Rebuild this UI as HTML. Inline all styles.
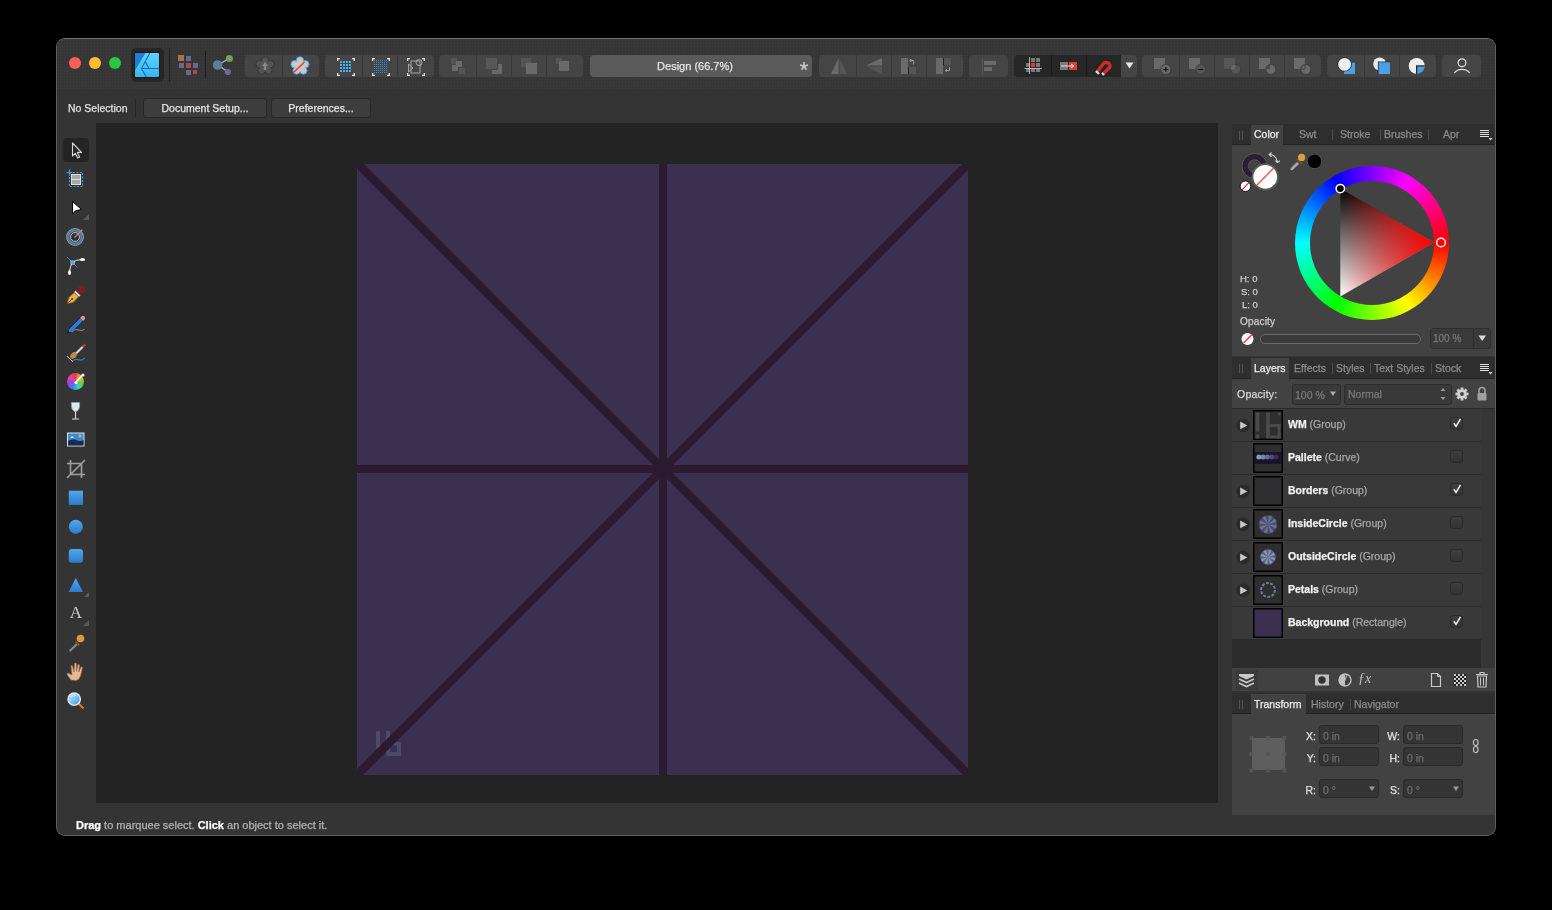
<!DOCTYPE html>
<html><head><meta charset="utf-8">
<style>
*{margin:0;padding:0;box-sizing:border-box}
html,body{width:1552px;height:910px;background:#000;overflow:hidden;font-family:"Liberation Sans",sans-serif;}
.a{position:absolute}
#win{position:absolute;left:56px;top:38px;width:1440px;height:798px;background:#343434;border:1px solid #5e5e5e;border-top-color:#727272;border-radius:9px;overflow:hidden}
#tb{position:absolute;left:0;top:0;width:1438px;height:50px;background-color:#353535;background-image:radial-gradient(circle,#393939 0.9px,transparent 1.1px);background-size:3px 3px}
.grp{position:absolute;top:55px;height:22px;background:#454545;border-radius:4px}
.dv{position:absolute;top:0;width:1px;height:22px;background:#383838}
.txt{position:absolute;white-space:nowrap;font-size:10.5px;line-height:12px;will-change:transform;-webkit-text-stroke:0.25px currentColor}
</style></head><body>
<div id="win"><div id="tb"></div></div>

<!-- traffic lights -->
<div class="a" style="left:69px;top:57px;width:12px;height:12px;border-radius:50%;background:#fe5f57"></div>
<div class="a" style="left:89px;top:57px;width:12px;height:12px;border-radius:50%;background:#febc2e"></div>
<div class="a" style="left:109px;top:57px;width:12px;height:12px;border-radius:50%;background:#28c840"></div>


<!-- persona -->
<div class="a" style="left:131px;top:48px;width:33px;height:34px;background:#262626;border-radius:5px"></div>
<svg class="a" style="left:134px;top:52px" width="26" height="26" viewBox="-1 -1 26 26">
<defs><linearGradient id="pg" x1="0" y1="0" x2="0" y2="1"><stop offset="0" stop-color="#5ad4fb"/><stop offset="1" stop-color="#38b8f2"/></linearGradient></defs>
<rect x="-1" y="-1" width="26" height="26" fill="#1d1614"/>
<rect x="0" y="0" width="24" height="24" rx="1" fill="url(#pg)"/>
<path d="M0 0 H10.5 L0 17.5 Z" fill="#1f80d0"/>
<path d="M14.8 0 L6.5 15.5 L11.3 24 M10.5 9 L14 15.5 M6.5 15.5 H24" stroke="#1a6ab8" stroke-width="1.1" fill="none"/>
</svg>
<div class="a" style="left:169px;top:48px;width:1px;height:34px;background:#1e1e1e"></div>
<svg class="a" style="left:176px;top:53px" width="24" height="24">
<rect x="2" y="2" width="6" height="6" fill="#a8734a"/>
<rect x="10" y="3" width="5" height="5" fill="#6a6891"/>
<rect x="3" y="10" width="5" height="5" fill="#6a6891"/>
<rect x="10" y="10" width="5" height="5" fill="#ad4b4b"/>
<rect x="17" y="10" width="5" height="5" fill="#6a6891"/>
<rect x="10" y="17" width="5" height="5" fill="#6a6891"/>
<rect x="17" y="17" width="4" height="4" fill="#ad4b4b"/>
</svg>
<div class="a" style="left:205px;top:51px;width:1px;height:27px;background:#1e1e1e"></div>
<svg class="a" style="left:210px;top:53px" width="24" height="24">
<path d="M8 12 L19 5.5 M8 12 L18 19" stroke="#b8b8b8" stroke-width="1.2"/>
<circle cx="7.6" cy="12" r="4.8" fill="#5a809e"/>
<circle cx="19.4" cy="5.5" r="3.6" fill="#789a5e"/>
<circle cx="17.9" cy="19" r="3.1" fill="#6a6a9a"/>
</svg>

<div class="grp" style="left:245px;width:74px"><div class="dv" style="left:37px"></div></div>
<svg class="a" style="left:255px;top:56px" width="20" height="20" viewBox="-10 -10 20 20">
<g fill="#545454" stroke="#2e2e2e" stroke-width="0.8"><circle cx="0" cy="-5.6" r="3.7"/><circle cx="5.4" cy="-1.8" r="3.7"/><circle cx="3.4" cy="4.6" r="3.7"/><circle cx="-3.4" cy="4.6" r="3.7"/><circle cx="-5.4" cy="-1.8" r="3.7"/></g>
<circle r="5.6" fill="#545454"/>
<path d="M0 -4 L-3 0 H-1.2 V4 H1.2 V0 H3 Z" fill="#888"/>
</svg>
<svg class="a" style="left:290px;top:56px" width="20" height="20" viewBox="-10 -10 20 20">
<g fill="#c8c8c8" stroke="#3a9ae0" stroke-width="1"><circle cx="0" cy="-5.6" r="3.7"/><circle cx="5.4" cy="-1.8" r="3.7"/><circle cx="3.4" cy="4.6" r="3.7"/><circle cx="-3.4" cy="4.6" r="3.7"/><circle cx="-5.4" cy="-1.8" r="3.7"/></g>
<circle r="5.8" fill="#c8c8c8"/>
<path d="M-6.5 6.5 L4.5 -4" stroke="#f03a2a" stroke-width="1.5"/>
</svg>

<div class="grp" style="left:325px;width:109px"><div class="dv" style="left:37px"></div><div class="dv" style="left:72px"></div></div>
<svg class="a" style="left:337px;top:58px" width="18" height="18">
<path d="M0.5 3 V0.5 H3 M15 0.5 H17.5 V3 M17.5 15 V17.5 H15 M3 17.5 H0.5 V15" stroke="#e8e8e8" stroke-width="1.6" fill="none"/>
<g fill="#4ab0f4"><rect x="3" y="3" width="2" height="2"/><rect x="6" y="3" width="2" height="2"/><rect x="9" y="3" width="2" height="2"/><rect x="12" y="3" width="2" height="2"/>
<rect x="3" y="6" width="2" height="2"/><rect x="6" y="6" width="2" height="2"/><rect x="9" y="6" width="2" height="2"/><rect x="12" y="6" width="2" height="2"/>
<rect x="3" y="9" width="2" height="2"/><rect x="6" y="9" width="2" height="2"/><rect x="9" y="9" width="2" height="2"/><rect x="12" y="9" width="2" height="2"/>
<rect x="3" y="12" width="2" height="2"/><rect x="6" y="12" width="2" height="2"/><rect x="9" y="12" width="2" height="2"/><rect x="12" y="12" width="2" height="2"/></g>
</svg>
<svg class="a" style="left:372px;top:58px" width="18" height="18">
<path d="M0.5 3 V0.5 H3 M15 0.5 H17.5 V3 M17.5 15 V17.5 H15 M3 17.5 H0.5 V15" stroke="#e8e8e8" stroke-width="1.6" fill="none"/>
<path d="M2.5 2 V16 M4.5 2 V16 M6.5 2 V16 M8.5 2 V16 M10.5 2 V16 M12.5 2 V16 M14.5 2 V16" stroke="#3a8fd0" stroke-width="1" stroke-dasharray="1 1"/>
</svg>
<svg class="a" style="left:407px;top:58px" width="18" height="18">
<path d="M0.5 3 V0.5 H3 M15 0.5 H17.5 V3 M17.5 15 V17.5 H15 M3 17.5 H0.5 V15" stroke="#e8e8e8" stroke-width="1.6" fill="none"/>
<g stroke="#b0b0b0" stroke-width="0.9" fill="none"><rect x="4" y="3" width="9" height="12"/><circle cx="12" cy="4.5" r="3"/><path d="M1.5 6 V14 L6 10 Z"/></g>
</svg>

<div class="grp" style="left:439px;width:144px"><div class="dv" style="left:37px"></div><div class="dv" style="left:72px"></div><div class="dv" style="left:107px"></div></div>
<svg class="a" style="left:449px;top:57px" width="20" height="20">
<rect x="2" y="1" width="6" height="6" fill="#555"/><rect x="7" y="4" width="6" height="6" fill="#6a6a6a"/><rect x="3" y="8" width="6" height="6" fill="#6a6a6a"/><rect x="10" y="11" width="6" height="6" fill="#555"/>
</svg>
<svg class="a" style="left:484px;top:57px" width="20" height="20">
<rect x="2" y="1" width="11" height="11" fill="#575757"/><path d="M14 7 H18 V17 H8 V13 H14 Z" fill="#6a6a6a"/>
</svg>
<svg class="a" style="left:519px;top:57px" width="20" height="20">
<rect x="2" y="1" width="10" height="9" fill="#555"/><rect x="7" y="6" width="11" height="11" fill="#6a6a6a"/>
</svg>
<svg class="a" style="left:554px;top:57px" width="20" height="20">
<rect x="2" y="1" width="6" height="6" fill="#555"/><rect x="5" y="4" width="10" height="10" fill="#6a6a6a"/>
</svg>

<div class="a" style="left:590px;top:55px;width:222px;height:22px;background:#5a5a5a;border-radius:4px"></div>
<div class="txt" style="left:590px;top:59px;width:210px;text-align:center;color:#e4e4e4;font-size:11px;line-height:14px">Design (66.7%)</div>
<svg class="a" style="left:798px;top:60px" width="12" height="12" viewBox="-6 -6.3 12 12"><path d="M0 0 L0.00 -4.20 M0 0 L3.99 -1.30 M0 0 L2.47 3.40 M0 0 L-2.47 3.40 M0 0 L-3.99 -1.30 " stroke="#c8c8c8" stroke-width="1.6" stroke-linecap="butt"/></svg>

<div class="grp" style="left:819px;width:144px"><div class="dv" style="left:37px"></div><div class="dv" style="left:72px"></div><div class="dv" style="left:107px"></div></div>
<svg class="a" style="left:829px;top:57px" width="20" height="20">
<path d="M2 17 L9.5 1 V17 Z" fill="#6a6a6a"/><path d="M10.5 1 L18 17 H10.5 Z" fill="#555"/>
</svg>
<svg class="a" style="left:864px;top:57px" width="20" height="20">
<path d="M2 8.5 L18 1 V8.5 Z" fill="#6a6a6a"/><path d="M2 9.5 L18 17 V9.5 Z" fill="#555"/>
</svg>
<svg class="a" style="left:899px;top:57px" width="20" height="20">
<rect x="2" y="1" width="7" height="16" fill="#6a6a6a"/><rect x="10" y="10" width="7" height="7" fill="#555"/><rect x="9" y="10" width="1" height="7" fill="#222"/>
<path d="M10.5 3.5 L12 2 V5 Z M11.5 3.5 H14.5 V7.5" stroke="#9a9a9a" stroke-width="1" fill="none"/>
</svg>
<svg class="a" style="left:934px;top:57px" width="20" height="20">
<rect x="2" y="1" width="7" height="16" fill="#6a6a6a"/><rect x="10" y="1" width="7" height="7" fill="#555"/><rect x="9" y="1" width="1" height="7" fill="#222"/>
<path d="M15.5 10 V13.5 H11.5 M13 12 L11.5 13.5 L13 15" stroke="#9a9a9a" stroke-width="1" fill="none"/>
</svg>

<div class="grp" style="left:969px;width:39px"></div>
<svg class="a" style="left:979px;top:57px" width="20" height="20">
<rect x="3" y="1" width="1" height="16" fill="#555"/><rect x="5" y="4" width="12" height="4" fill="#6a6a6a"/><rect x="5" y="10" width="8" height="4" fill="#6a6a6a"/>
</svg>

<div class="grp" style="left:1014px;width:123px;background:#454545"></div>
<div class="a" style="left:1014px;top:55px;width:107px;height:22px;background:#262626;border-radius:4px 0 0 4px"></div>
<div class="a" style="left:1051px;top:55px;width:1px;height:22px;background:#1a1a1a"></div>
<div class="a" style="left:1086px;top:55px;width:1px;height:22px;background:#1a1a1a"></div>
<svg class="a" style="left:1024px;top:56px" width="20" height="20">
<g fill="#7a7a7a"><rect x="7" y="2" width="4" height="4"/><rect x="12" y="2" width="4" height="4"/><rect x="2" y="7" width="4" height="4"/><rect x="12" y="7" width="4" height="4"/><rect x="7" y="12" width="4" height="4"/><rect x="12" y="12" width="4" height="4"/><rect x="2" y="12" width="4" height="4"/></g>
<rect x="7" y="7" width="4" height="4" fill="#e03a3a"/>
<path d="M5.5 1 V18 M0.5 12.5 H18" stroke="#cfcfcf" stroke-width="0.8"/>
</svg>
<svg class="a" style="left:1059px;top:56px" width="20" height="20">
<rect x="1" y="6" width="8" height="8" fill="#7a7a7a"/><rect x="10" y="6" width="8" height="8" fill="#e03a3a"/>
<path d="M2 10 H14 M12 8 L15 10 L12 12" stroke="#e8e8e8" stroke-width="1" fill="none"/>
</svg>
<svg class="a" style="left:1094px;top:56px" width="20" height="20">
<path d="M3 16 L10 7 A4 4 0 0 1 16 11 L9 18" stroke="#d42a2a" stroke-width="3.2" fill="none"/>
<path d="M2 15 L5 18 M8 17 L10 19" stroke="#ddd" stroke-width="2.2"/>
</svg>
<svg class="a" style="left:1125px;top:62px" width="9" height="7"><path d="M0.5 0.5 H8.5 L4.5 6.5 Z" fill="#e8e8e8"/></svg>

<div class="grp" style="left:1142px;width:179px"><div class="dv" style="left:37px"></div><div class="dv" style="left:72px"></div><div class="dv" style="left:107px"></div><div class="dv" style="left:142px"></div></div>
<svg class="a" style="left:1152px;top:57px" width="20" height="20">
<rect x="2" y="1" width="11" height="11" fill="#6a6a6a"/><circle cx="13.8" cy="12.4" r="5" fill="#6a6a6a" stroke="#3a3a3a" stroke-width="0.8"/>
<path d="M11.3 12.5 H16.3 M13.8 10 V15" stroke="#111" stroke-width="1.1"/>
</svg>
<svg class="a" style="left:1187px;top:57px" width="20" height="20">
<rect x="2" y="1" width="11" height="11" fill="#6a6a6a"/><circle cx="13.8" cy="12.4" r="5" fill="#555" stroke="#3a3a3a" stroke-width="0.8"/>
<path d="M11.3 12.5 H16.3" stroke="#111" stroke-width="1.1"/>
</svg>
<svg class="a" style="left:1222px;top:57px" width="20" height="20">
<rect x="2" y="1" width="11" height="11" fill="#575757"/><circle cx="13.8" cy="12.4" r="5" fill="#555" stroke="#3a3a3a" stroke-width="0.8"/>
<path d="M8.8 12 A5 5 0 0 1 13 7.5 V12 Z" fill="#6a6a6a"/>
</svg>
<svg class="a" style="left:1257px;top:57px" width="20" height="20">
<rect x="2" y="1" width="11" height="11" fill="#6a6a6a"/><circle cx="13.8" cy="12.4" r="5" fill="#6a6a6a" stroke="#3a3a3a" stroke-width="0.8"/>
<path d="M8.8 12 A5 5 0 0 1 13 7.5 V12 Z" fill="#4a4a4a"/>
</svg>
<svg class="a" style="left:1292px;top:57px" width="20" height="20">
<rect x="2" y="1" width="11" height="11" fill="#6a6a6a"/><circle cx="13.8" cy="12.4" r="5" fill="#6a6a6a" stroke="#3a3a3a" stroke-width="0.8"/>
<path d="M8.8 12 A5 5 0 0 1 13 7.5 V12 Z" fill="#6a6a6a" stroke="#3a3a3a" stroke-width="0.8"/>
</svg>

<div class="grp" style="left:1327px;width:109px"><div class="dv" style="left:37px"></div><div class="dv" style="left:72px"></div></div>
<svg class="a" style="left:1337px;top:57px" width="20" height="20">
<rect x="7" y="5.8" width="11" height="11.2" fill="#4aa0e6"/><circle cx="7.6" cy="7.4" r="7.2" fill="#2a2a2a"/><circle cx="7.6" cy="7.4" r="6.4" fill="#eeeeee"/>
</svg>
<svg class="a" style="left:1372px;top:57px" width="20" height="20">
<circle cx="7.6" cy="6.9" r="6.4" fill="#eeeeee"/><rect x="5.8" y="4.5" width="12.2" height="12.5" fill="#2a2a2a"/><rect x="6.6" y="5.3" width="11.4" height="11.7" fill="#4aa0e6"/>
</svg>
<svg class="a" style="left:1407px;top:57px" width="20" height="20">
<circle cx="9.7" cy="8.9" r="8" fill="#eeeeee"/><path d="M9 8.2 H17.7 A8 8 0 0 1 9 16.9 Z" fill="#2a2a2a"/><path d="M10.3 9.6 H17.7 A8 8 0 0 1 10.3 16.8 Z" fill="#4aa0e6"/>
</svg>
<div class="grp" style="left:1442px;width:39px"></div>
<svg class="a" style="left:1452px;top:57px" width="20" height="20">
<circle cx="10" cy="5.8" r="3.9" stroke="#e0e0e0" stroke-width="1.2" fill="none"/><path d="M2.3 16 A9 7.5 0 0 1 17.7 16" stroke="#e0e0e0" stroke-width="1.2" fill="none"/>
</svg>

<!-- context bar -->
<div class="txt" style="left:68px;top:102px;color:#e0e0e0;font-size:10.5px">No Selection</div>
<div class="a" style="left:135px;top:99px;width:1px;height:19px;background:#262626"></div>
<div class="a" style="left:143px;top:98px;width:124px;height:20px;background:#3d3d3d;border:1px solid #272727;border-radius:3px"></div>
<div class="txt" style="left:143px;top:102px;width:124px;text-align:center;color:#e6e6e6;font-size:10.5px">Document Setup...</div>
<div class="a" style="left:271px;top:98px;width:100px;height:20px;background:#3d3d3d;border:1px solid #272727;border-radius:3px"></div>
<div class="txt" style="left:271px;top:102px;width:100px;text-align:center;color:#e6e6e6;font-size:10.5px">Preferences...</div>


<!-- left tools -->
<div class="a" style="left:63px;top:138px;width:26px;height:24px;background:#242424;border-radius:4px"></div>
<svg class="a" style="left:66px;top:140px" width="20" height="20">
<path d="M6.5 3 V16 L9.3 13.3 L11.6 18 L13.6 17 L11.4 12.4 H15.5 Z" fill="#262626" stroke="#d8d8d8" stroke-width="1.1" stroke-linejoin="round"/>
</svg>
<svg class="a" style="left:66px;top:169px" width="20" height="20">
<rect x="3.5" y="3.5" width="13" height="14" fill="none" stroke="#3aa0f0" stroke-width="1.2" stroke-dasharray="2 1.4"/>
<path d="M3.5 0.5 V6.5 M0.5 3.5 H6.5" stroke="#3aa0f0" stroke-width="1.2"/>
<rect x="5.5" y="5.5" width="9" height="10" fill="#a8a8a8" stroke="#e0e0e0" stroke-width="1"/>
<path d="M6 10.5 H14" stroke="#e0e0e0" stroke-width="1"/>
</svg>
<svg class="a" style="left:66px;top:198px" width="24" height="24">
<path d="M6.5 3.5 V16 L9.5 12.8 L15.5 11.5 Z" fill="#fff" stroke="#000" stroke-width="1" stroke-linejoin="round"/>
<path d="M23 16 V22 H17 Z" fill="#5a5a5a"/>
</svg>
<svg class="a" style="left:65px;top:227px" width="20" height="20">
<circle cx="10" cy="10" r="8.3" fill="#3a3a3a" stroke="#9a9a9a" stroke-width="1.2"/>
<circle cx="10" cy="10" r="6.6" fill="none" stroke="#4a86b8" stroke-width="2"/>
<circle cx="10" cy="10" r="4.5" fill="none" stroke="#bbbbbb" stroke-width="1"/>
<circle cx="10" cy="10" r="3" fill="#2e2e2e"/>
<path d="M9.5 10.5 L17.5 2.5" stroke="#e07a7a" stroke-width="1.2"/>
</svg>
<svg class="a" style="left:66px;top:256px" width="20" height="20">
<path d="M1 1 L11.5 11.5" stroke="#3a8ad0" stroke-width="0.9"/>
<path d="M6.5 6.5 Q10 3.5 16 3.5 M6.5 6.5 Q4 10 3.5 16" stroke="#e8e8e8" stroke-width="1" fill="none"/>
<rect x="4.9" y="4.9" width="3.3" height="3.3" fill="#3aa0f0" stroke="#cfe6ff" stroke-width="0.6"/>
<ellipse cx="16.5" cy="3.5" rx="2.6" ry="1.5" fill="#fff"/>
<ellipse cx="3.5" cy="16.5" rx="1.5" ry="2.6" fill="#fff"/>
</svg>
<svg class="a" style="left:66px;top:285px" width="20" height="20">
<path d="M1.2 18.8 L2.8 12.5 L8.2 7.5 L12.5 11.8 L7.5 17.2 Z" fill="#e8b040" stroke="#8a5a10" stroke-width="0.7"/>
<path d="M1.2 18.8 L6 14" stroke="#4a2a08" stroke-width="0.8"/><circle cx="6.2" cy="13.8" r="0.9" fill="#4a2a08"/>
<path d="M8 7 L13 12 L14.5 10.5 L9.5 5.5 Z" fill="#e0e0e0" stroke="#555" stroke-width="0.4"/>
<path d="M9.8 5.2 L14.8 10.2 L19 6 Q19.5 3 17.5 1.5 Q16 0.5 14 1 Z" fill="#7a2020"/>
</svg>
<svg class="a" style="left:66px;top:314px" width="20" height="20">
<path d="M2.5 15.5 L14 4 L17 7 L5.5 18.5 L1.5 19 Z" fill="#2e7ad8" stroke="#0d2a5a" stroke-width="0.9"/>
<path d="M14 4 L15.5 2.5 A2.1 2.1 0 0 1 18.5 5.5 L17 7 Z" fill="#e89090"/>
<path d="M1.5 19 L3 17.5" stroke="#111" stroke-width="1.5"/>
<path d="M6 18 Q9 14 13 16 Q16 17 18.5 15.5" stroke="#9a9a9a" stroke-width="0.9" fill="none"/>
</svg>
<svg class="a" style="left:66px;top:343px" width="20" height="20">
<path d="M4 14 Q5 9 9 9 L11 11 Q11 15 6 16 Z" fill="#c08a40"/>
<path d="M9.5 9.5 L16 3 L17.5 4.5 L11 11 Z" fill="#d8d8d8"/>
<path d="M16 3 L18.5 0.5 L20 2 L17.5 4.5 Z" fill="#e03030"/>
<path d="M1 13 L7 19" stroke="#e0e0e0" stroke-width="0.9"/>
<path d="M6 18 Q10 15 13 17 Q16 18 19 15" stroke="#3a8ad0" stroke-width="1" fill="none"/>
</svg>
<div class="a" style="left:67px;top:373px;width:17px;height:17px;border-radius:50%;background:conic-gradient(#e84040,#f0c040,#60d040,#40d0c0,#4080f0,#a040e0,#e040a0,#e84040)"></div>
<svg class="a" style="left:66px;top:372px" width="20" height="20">
<path d="M10 10 L16.5 3" stroke="#fff" stroke-width="1.3"/><circle cx="10" cy="10.5" r="1.6" fill="#fff"/><circle cx="17" cy="3" r="1.5" fill="#fff"/>
</svg>
<svg class="a" style="left:66px;top:401px" width="20" height="20">
<path d="M5.5 1.5 H13.5 Q14.5 9 9.5 11 Q4.5 9 5.5 1.5 Z" fill="#dfe6ee" stroke="#8aa0b8" stroke-width="0.8"/>
<path d="M9.5 11 V17.5 M6 18 H13" stroke="#cfd6de" stroke-width="1.2"/>
</svg>
<svg class="a" style="left:66px;top:430px" width="20" height="20">
<rect x="1" y="2.5" width="17.5" height="14" fill="#e0e0e0"/>
<rect x="2" y="3.5" width="15.5" height="12" fill="#3a8ad8"/>
<path d="M2 11 Q7 8 10 10 Q14 12 17.5 10 V15.5 H2 Z" fill="#1a2a4a"/>
<path d="M4 8 L6 6 L8 8 Z" fill="#fff"/><circle cx="14" cy="6" r="1.4" fill="#f0b040"/>
</svg>
<svg class="a" style="left:66px;top:459px" width="20" height="20">
<path d="M4.5 1 V15.5 H19 M1 4.5 H15.5 V19 M1 19 L19 1" stroke="#a0a0a0" stroke-width="1.6" fill="none"/>
</svg>
<svg class="a" style="left:66px;top:488px" width="20" height="20">
<defs><linearGradient id="bg1" x1="0" y1="0" x2="0" y2="1"><stop offset="0" stop-color="#52a8ec"/><stop offset="1" stop-color="#2a7ccc"/></linearGradient></defs>
<rect x="2.8" y="2.7" width="14.2" height="14.2" fill="url(#bg1)"/>
</svg>
<svg class="a" style="left:66px;top:517px" width="20" height="20">
<circle cx="9.8" cy="9.8" r="7" fill="url(#bg1)"/>
</svg>
<svg class="a" style="left:66px;top:546px" width="20" height="20">
<rect x="2.8" y="2.9" width="14.2" height="13.9" rx="3" fill="url(#bg1)"/>
</svg>
<svg class="a" style="left:66px;top:575px" width="24" height="24">
<path d="M9.8 3 L17 17 H2.6 Z" fill="url(#bg1)"/>
<path d="M23 17 V22 H18 Z" fill="#5a5a5a"/>
</svg>
<div class="a" style="left:66px;top:602px;width:20px;height:22px;font-family:'Liberation Serif',serif;font-size:17px;line-height:22px;color:#d0d0d0;text-align:center;will-change:transform">A</div>
<svg class="a" style="left:66px;top:604px" width="24" height="24"><path d="M23 16 V22 H17 Z" fill="#5a5a5a"/></svg>
<svg class="a" style="left:66px;top:633px" width="20" height="20">
<path d="M2.5 17.5 L10 10 L12 12 L4.5 19 Z" fill="#888" stroke="#333" stroke-width="0.7"/>
<path d="M9 9 L13 13 L14 12 L10 8 Z" fill="#a05a20"/>
<circle cx="14.5" cy="5.5" r="3.8" fill="#d89a3a"/>
</svg>
<svg class="a" style="left:66px;top:662px" width="20" height="20">
<path d="M5 18 Q2 14 1 12 Q1 10.5 3 11.5 L6 13 L5 4 Q5.5 2.5 6.5 4 L8 10 L8.5 1.5 Q9.5 0.5 10.3 1.5 L10.5 9.5 L12 2.5 Q13 1.8 13.5 3 L12.8 10 L15 5 Q16 4.5 16.5 5.5 L14.5 14 Q13 18 10 18.5 Z" fill="#e8b890" stroke="#9a6a4a" stroke-width="0.6"/>
</svg>
<svg class="a" style="left:66px;top:691px" width="20" height="20">
<path d="M12 12 L17.5 17.5" stroke="#e07a30" stroke-width="2"/>
<defs><linearGradient id="lz" x1="0" y1="0" x2="1" y2="1"><stop offset="0" stop-color="#cdeeff"/><stop offset="0.5" stop-color="#7cc4f4"/><stop offset="1" stop-color="#3a8ee0"/></linearGradient></defs><circle cx="8.2" cy="8.2" r="6.2" fill="url(#lz)" stroke="#e8e8e8" stroke-width="1.4"/>
<path d="M5 6 Q7 4 10 4.5" stroke="#d0ecff" stroke-width="1" fill="none"/>
</svg>

<!-- canvas -->
<div class="a" style="left:96px;top:123px;width:1122px;height:680px;background:#232323"></div>
<!-- document -->
<svg class="a" style="left:357px;top:164px" width="611" height="611" viewBox="0 0 611 611">
<rect width="611" height="611" fill="#3b3050"/>
<g fill="#4d4a67"><rect x="19" y="567" width="4" height="17.5"/><rect x="19" y="588" width="4" height="4"/><rect x="29" y="567" width="4" height="25"/><path d="M29 578 H44 V592 H29 Z M33 581.5 V588 H40 V581.5 Z" fill-rule="evenodd"/><rect x="40" y="567" width="4" height="4"/></g>
<g stroke="#2c1a30" stroke-width="8">
<line x1="306" y1="0" x2="306" y2="611"/>
<line x1="0" y1="305" x2="611" y2="305"/>
</g>
<g stroke="#2c1a30" stroke-width="8.3">
<line x1="0" y1="-1" x2="611" y2="610"/>
<line x1="611" y1="0" x2="0" y2="611"/>
</g>
</svg>

<!-- status bar text -->
<div class="txt" style="left:76px;top:819px;color:#b4b4b4;font-size:11px"><b style="color:#fff">Drag</b> to marquee select. <b style="color:#fff">Click</b> an object to select it.</div>

<!-- right panel -->
<div class="a" style="left:1232px;top:124px;width:263px;height:21px;background:#2e2e2e;border-bottom:1px solid #232323"></div>
<div class="a" style="left:1232px;top:145px;width:263px;height:211px;background:#424242"></div>
<div class="a" style="left:1232px;top:357px;width:263px;height:22px;background:#2e2e2e;border-bottom:1px solid #232323"></div>
<div class="a" style="left:1232px;top:379px;width:263px;height:29px;background:#424242"></div>
<div class="a" style="left:1232px;top:408px;width:249px;height:260px;background:#2c2c2c"></div>
<div class="a" style="left:1232px;top:408px;width:263px;height:1px;background:#2a2a2a"></div><div class="a" style="left:1481px;top:409px;width:14px;height:259px;background:#363636"></div>
<div class="a" style="left:1232px;top:668px;width:263px;height:23px;background:#414141"></div>
<div class="a" style="left:1232px;top:693px;width:263px;height:21px;background:#2e2e2e;border-bottom:1px solid #232323"></div>
<div class="a" style="left:1232px;top:714px;width:263px;height:101px;background:#424242"></div>


<!-- color tab bar -->
<div class="a" style="left:1239px;top:131px;width:1px;height:9px;background:#555"></div>
<div class="a" style="left:1242px;top:131px;width:1px;height:9px;background:#555"></div>
<div class="a" style="left:1251px;top:125px;width:32px;height:20px;background:#424242"></div>
<div class="txt" style="left:1254px;top:128px;color:#f0f0f0">Color</div>
<div class="txt" style="left:1299px;top:128px;color:#8c8c8c">Swt</div>
<div class="a" style="left:1332px;top:129px;width:1px;height:11px;background:#4a4a4a"></div>
<div class="txt" style="left:1340px;top:128px;color:#8c8c8c">Stroke</div>
<div class="a" style="left:1380px;top:129px;width:1px;height:11px;background:#4a4a4a"></div>
<div class="txt" style="left:1384px;top:128px;color:#8c8c8c">Brushes</div>
<div class="a" style="left:1428px;top:129px;width:1px;height:11px;background:#4a4a4a"></div>
<div class="txt" style="left:1443px;top:128px;color:#8c8c8c">Apr</div>
<svg class="a" style="left:1479px;top:129px" width="14" height="12"><path d="M1 1.5 H10 M1 3.5 H10 M1 5.5 H10 M1 7.5 H10" stroke="#e0e0e0" stroke-width="1"/><path d="M9.5 9 H13.5 L11.5 11.5 Z" fill="#e0e0e0"/></svg>

<!-- fill/stroke -->
<svg class="a" style="left:1232px;top:145px" width="100" height="50">
<circle cx="22.6" cy="21" r="12.6" fill="#2b1e33" stroke="#5a5a5a" stroke-width="1"/>
<circle cx="22.6" cy="21" r="6.3" fill="#424242" stroke="#555" stroke-width="0.9"/>
<circle cx="33.2" cy="31.9" r="13" fill="#424242" stroke="#5e5e5e" stroke-width="1.2"/>
<circle cx="33.2" cy="31.9" r="11.9" fill="#ffffff"/>
<path d="M24.5 40.5 L41.8 23" stroke="#ff5050" stroke-width="1.4"/>
<circle cx="13.4" cy="41.2" r="5.3" fill="#fff" stroke="#111" stroke-width="1"/>
<path d="M10 44.8 L17 37.6" stroke="#f02020" stroke-width="1.1"/>
<path d="M38 9.5 Q43.5 9.5 45.5 16.8" stroke="#d8d8d8" stroke-width="1.1" fill="none"/>
<path d="M39.5 7.5 L37.2 9.6 L39.5 11.8 M43.5 15.5 L45.5 17.5 L47.8 15.8" stroke="#d8d8d8" stroke-width="1.1" fill="none"/>
<path d="M57.5 24 L65 16.5 L67.5 19 L60 26 Z" fill="#a8a8a8" stroke="#2a2a2a" stroke-width="0.6"/>
<path d="M64 14.5 L69.5 20 L71 18.5 L65.5 13 Z" fill="#7a4a20"/>
<circle cx="69.6" cy="12.4" r="3.6" fill="#d8a040"/>
<circle cx="82.5" cy="16.4" r="7.6" fill="#555"/>
<circle cx="82.5" cy="16.4" r="6.8" fill="#000"/>
</svg>

<!-- wheel -->
<div class="a" style="left:1295px;top:166px;width:154px;height:154px;border-radius:50%;background:conic-gradient(hsl(270,100%,50%) 0deg,hsl(285,100%,50%) 15deg,hsl(300,100%,50%) 30deg,hsl(315,100%,50%) 45deg,hsl(330,100%,50%) 60deg,hsl(345,100%,50%) 75deg,hsl(0,100%,50%) 90deg,hsl(15,100%,50%) 105deg,hsl(30,100%,50%) 120deg,hsl(45,100%,50%) 135deg,hsl(60,100%,50%) 150deg,hsl(75,100%,50%) 165deg,hsl(90,100%,50%) 180deg,hsl(105,100%,50%) 195deg,hsl(120,100%,50%) 210deg,hsl(135,100%,50%) 225deg,hsl(150,100%,50%) 240deg,hsl(165,100%,50%) 255deg,hsl(180,100%,50%) 270deg,hsl(195,100%,50%) 285deg,hsl(210,100%,50%) 300deg,hsl(225,100%,50%) 315deg,hsl(240,100%,50%) 330deg,hsl(255,100%,50%) 345deg,hsl(270,100%,50%) 360deg)"></div>
<div class="a" style="left:1310px;top:181px;width:124px;height:124px;border-radius:50%;background:#424242"></div>
<svg class="a" style="left:1295px;top:166px" width="160" height="160">
<defs>
<linearGradient id="kw" x1="0" y1="0" x2="0" y2="1"><stop offset="0" stop-color="#000"/><stop offset="1" stop-color="#fff"/></linearGradient>
<linearGradient id="rd" gradientUnits="userSpaceOnUse" x1="139" y1="76.5" x2="45.3" y2="76.5"><stop offset="0" stop-color="#ff0000" stop-opacity="1"/><stop offset="1" stop-color="#ff0000" stop-opacity="0"/></linearGradient>
</defs>
<path d="M45.3 22.6 L139 76.5 L45.3 130.4 Z" fill="url(#kw)"/>
<path d="M45.3 22.6 L139 76.5 L45.3 130.4 Z" fill="url(#rd)"/>
<circle cx="45.3" cy="22.6" r="4.2" fill="#000" stroke="#fff" stroke-width="1.5"/>
<circle cx="146" cy="76.5" r="4.3" fill="#f00" stroke="#fff" stroke-width="1.4"/>
</svg>

<div class="txt" style="left:1240px;top:273px;color:#d0d0d0;font-size:9.5px;line-height:12px">H: 0</div>
<div class="txt" style="left:1241px;top:286px;color:#d0d0d0;font-size:9.5px;line-height:12px">S: 0</div>
<div class="txt" style="left:1242px;top:299px;color:#d0d0d0;font-size:9.5px;line-height:12px">L: 0</div>
<div class="txt" style="left:1240px;top:316px;color:#d0d0d0;font-size:10px;line-height:12px;letter-spacing:0.2px">Opacity</div>
<svg class="a" style="left:1240px;top:332px" width="14" height="14"><circle cx="7.5" cy="7" r="6" fill="#fff"/><path d="M3.5 11 L11.5 3" stroke="#f03030" stroke-width="1.5"/></svg>
<div class="a" style="left:1260px;top:334px;width:161px;height:10px;border-radius:5px;border:1px solid #6a6a6a;background:#3a3a3a"></div>
<div class="a" style="left:1430px;top:328px;width:61px;height:21px;border-radius:3px;border:1px solid #2e2e2e;background:#3a3a3a"></div>
<div class="a" style="left:1473px;top:329px;width:1px;height:19px;background:#2e2e2e"></div>
<div class="txt" style="left:1433px;top:333px;color:#777;font-size:10px">100 %</div>
<svg class="a" style="left:1478px;top:335px" width="9" height="7"><path d="M0.5 0.5 H8 L4.25 6 Z" fill="#ddd"/></svg>

<!-- layers tab bar -->
<div class="a" style="left:1239px;top:364px;width:1px;height:9px;background:#555"></div>
<div class="a" style="left:1242px;top:364px;width:1px;height:9px;background:#555"></div>
<div class="a" style="left:1251px;top:358px;width:38px;height:21px;background:#424242"></div>
<div class="txt" style="left:1254px;top:362px;color:#f0f0f0">Layers</div>
<div class="txt" style="left:1294px;top:362px;color:#8c8c8c">Effects</div>
<div class="a" style="left:1332px;top:363px;width:1px;height:11px;background:#4a4a4a"></div>
<div class="txt" style="left:1336px;top:362px;color:#8c8c8c">Styles</div>
<div class="a" style="left:1370px;top:363px;width:1px;height:11px;background:#4a4a4a"></div>
<div class="txt" style="left:1374px;top:362px;color:#8c8c8c">Text Styles</div>
<div class="a" style="left:1431px;top:363px;width:1px;height:11px;background:#4a4a4a"></div>
<div class="txt" style="left:1435px;top:362px;color:#8c8c8c">Stock</div>
<svg class="a" style="left:1479px;top:363px" width="14" height="12"><path d="M1 1.5 H10 M1 3.5 H10 M1 5.5 H10 M1 7.5 H10" stroke="#e0e0e0" stroke-width="1"/><path d="M9.5 9 H13.5 L11.5 11.5 Z" fill="#e0e0e0"/></svg>

<div class="txt" style="left:1237px;top:388px;color:#d8d8d8;font-size:10.5px;letter-spacing:0.25px">Opacity:</div>
<div class="a" style="left:1292px;top:384px;width:49px;height:21px;border-radius:3px;border:1px solid #2c2c2c;background:#393939"></div>
<div class="txt" style="left:1295px;top:389px;color:#7a7a7a;font-size:10.5px">100 %</div>
<svg class="a" style="left:1330px;top:391px" width="7" height="6"><path d="M0 0.5 H6 L3 5 Z" fill="#aaa"/></svg>
<div class="a" style="left:1344px;top:384px;width:108px;height:21px;border-radius:3px;border:1px solid #2c2c2c;background:#393939"></div>
<div class="txt" style="left:1348px;top:388px;color:#7a7a7a;font-size:10.5px">Normal</div>
<svg class="a" style="left:1440px;top:387px" width="6" height="14"><path d="M0.5 4 L3 1 L5.5 4 Z M0.5 10 L3 13 L5.5 10 Z" fill="#999"/></svg>
<svg class="a" style="left:1455px;top:387px" width="14" height="14" viewBox="-7 -7 14 14">
<g fill="#d0d0d0"><circle r="4.6"/><rect x="-1.4" y="-6.5" width="2.8" height="13"/><rect x="-1.4" y="-6.5" width="2.8" height="13" transform="rotate(45)"/><rect x="-1.4" y="-6.5" width="2.8" height="13" transform="rotate(90)"/><rect x="-1.4" y="-6.5" width="2.8" height="13" transform="rotate(135)"/></g>
<circle r="1.9" fill="#424242"/>
</svg>
<svg class="a" style="left:1476px;top:386px" width="12" height="16"><path d="M3 7 V4.5 A3 3 0 0 1 9 4.5 V7" stroke="#a0a0a0" stroke-width="1.6" fill="none"/><rect x="1.5" y="7" width="9" height="7.5" rx="1" fill="#a0a0a0"/></svg>

<!-- layer rows -->
<div class="a" style="left:1232px;top:409px;width:249px;height:33px;background:#393939;border-bottom:1px solid #2a2a2a"></div>
<svg class="a" style="left:1236px;top:418px" width="15" height="15"><circle cx="7.3" cy="7.4" r="6.8" fill="#2b2b2b"/><path d="M4.2 3.6 L11.3 7.4 L4.2 11.2 Z" fill="#c8c8c8"/></svg>
<svg class="a" style="left:1253px;top:410px" width="30" height="30"><rect x="0" y="0" width="30" height="30" fill="#000"/><g transform="translate(1.5,1.5) scale(0.964)"><rect width="28" height="28" fill="#2e2e2e"/><rect x="1" y="1" width="4" height="20" fill="#4a4a4a"/><rect x="1" y="24" width="4" height="4" fill="#4a4a4a"/><rect x="12" y="1" width="4" height="27" fill="#4a4a4a"/><rect x="16" y="13" width="11" height="3" fill="#4a4a4a"/><rect x="24" y="13" width="3" height="15" fill="#4a4a4a"/><rect x="16" y="25" width="11" height="3" fill="#4a4a4a"/><rect x="24" y="1" width="3" height="3" fill="#4a4a4a"/></g></svg>
<div class="txt" style="left:1288px;top:418px;color:#f2f2f2;font-size:10.5px"><b>WM</b> <span style="color:#a8a8a8">(Group)</span></div>
<div class="a" style="left:1450px;top:417px;width:13px;height:13px;border-radius:3px;background:linear-gradient(#3e3e3e,#333);border:1px solid #2a2a2a"></div>
<svg class="a" style="left:1451px;top:417px" width="12" height="12"><path d="M2.8 6.3 L5 9.3 L9.5 1.8" stroke="#f0f0f0" stroke-width="1.5" fill="none"/></svg>
<div class="a" style="left:1232px;top:442px;width:249px;height:33px;background:#393939;border-bottom:1px solid #2a2a2a"></div>
<svg class="a" style="left:1253px;top:443px" width="30" height="30"><rect x="0" y="0" width="30" height="30" fill="#000"/><g transform="translate(1.5,1.5) scale(0.964)"><rect width="28" height="28" fill="#2e2e2e"/><rect x="0" y="8" width="28" height="12" fill="#14142a"/><circle cx="4.5" cy="13" r="2.6" fill="#8a9ab0"/><circle cx="9" cy="13" r="2.6" fill="#7a88a8"/><circle cx="13.5" cy="13" r="2.6" fill="#6a6a98"/><circle cx="18" cy="13" r="2.6" fill="#554a80"/><circle cx="22.5" cy="13" r="2.6" fill="#3e2c58"/></g></svg>
<div class="txt" style="left:1288px;top:451px;color:#f2f2f2;font-size:10.5px"><b>Pallete</b> <span style="color:#a8a8a8">(Curve)</span></div>
<div class="a" style="left:1450px;top:450px;width:13px;height:13px;border-radius:3px;background:linear-gradient(#3e3e3e,#333);border:1px solid #2a2a2a"></div>
<div class="a" style="left:1232px;top:475px;width:249px;height:33px;background:#393939;border-bottom:1px solid #2a2a2a"></div>
<svg class="a" style="left:1236px;top:484px" width="15" height="15"><circle cx="7.3" cy="7.4" r="6.8" fill="#2b2b2b"/><path d="M4.2 3.6 L11.3 7.4 L4.2 11.2 Z" fill="#c8c8c8"/></svg>
<svg class="a" style="left:1253px;top:476px" width="30" height="30"><rect x="0" y="0" width="30" height="30" fill="#000"/><g transform="translate(1.5,1.5) scale(0.964)"><rect width="28" height="28" fill="#2e2e2e"/><path d="M3 3 L25 25 M25 3 L3 25" stroke="#3a2a48" stroke-width="1" stroke-dasharray="1 2"/></g></svg>
<div class="txt" style="left:1288px;top:484px;color:#f2f2f2;font-size:10.5px"><b>Borders</b> <span style="color:#a8a8a8">(Group)</span></div>
<div class="a" style="left:1450px;top:483px;width:13px;height:13px;border-radius:3px;background:linear-gradient(#3e3e3e,#333);border:1px solid #2a2a2a"></div>
<svg class="a" style="left:1451px;top:483px" width="12" height="12"><path d="M2.8 6.3 L5 9.3 L9.5 1.8" stroke="#f0f0f0" stroke-width="1.5" fill="none"/></svg>
<div class="a" style="left:1232px;top:508px;width:249px;height:33px;background:#393939;border-bottom:1px solid #2a2a2a"></div>
<svg class="a" style="left:1236px;top:517px" width="15" height="15"><circle cx="7.3" cy="7.4" r="6.8" fill="#2b2b2b"/><path d="M4.2 3.6 L11.3 7.4 L4.2 11.2 Z" fill="#c8c8c8"/></svg>
<svg class="a" style="left:1253px;top:509px" width="30" height="30"><rect x="0" y="0" width="30" height="30" fill="#000"/><g transform="translate(1.5,1.5) scale(0.964)"><rect width="28" height="28" fill="#2e2e2e"/><circle cx="14" cy="14.5" r="9.3" fill="#4a4c72"/><path d="M14 14.5 L23.25 15.43 A9.3 9.3 0 0 1 22.19 18.90 Z" fill="#6c7592"/><path d="M14 14.5 L19.89 21.70 A9.3 9.3 0 0 1 16.68 23.40 Z" fill="#6c7592"/><path d="M14 14.5 L13.07 23.75 A9.3 9.3 0 0 1 9.60 22.69 Z" fill="#6c7592"/><path d="M14 14.5 L6.80 20.39 A9.3 9.3 0 0 1 5.10 17.18 Z" fill="#6c7592"/><path d="M14 14.5 L4.75 13.57 A9.3 9.3 0 0 1 5.81 10.10 Z" fill="#6c7592"/><path d="M14 14.5 L8.11 7.30 A9.3 9.3 0 0 1 11.32 5.60 Z" fill="#6c7592"/><path d="M14 14.5 L14.93 5.25 A9.3 9.3 0 0 1 18.40 6.31 Z" fill="#6c7592"/><path d="M14 14.5 L21.20 8.61 A9.3 9.3 0 0 1 22.90 11.82 Z" fill="#6c7592"/><circle cx="14" cy="14.5" r="9.3" fill="none" stroke="#4a4478" stroke-width="0.6"/></g></svg>
<div class="txt" style="left:1288px;top:517px;color:#f2f2f2;font-size:10.5px"><b>InsideCircle</b> <span style="color:#a8a8a8">(Group)</span></div>
<div class="a" style="left:1450px;top:516px;width:13px;height:13px;border-radius:3px;background:linear-gradient(#3e3e3e,#333);border:1px solid #2a2a2a"></div>
<div class="a" style="left:1232px;top:541px;width:249px;height:33px;background:#393939;border-bottom:1px solid #2a2a2a"></div>
<svg class="a" style="left:1236px;top:550px" width="15" height="15"><circle cx="7.3" cy="7.4" r="6.8" fill="#2b2b2b"/><path d="M4.2 3.6 L11.3 7.4 L4.2 11.2 Z" fill="#c8c8c8"/></svg>
<svg class="a" style="left:1253px;top:542px" width="30" height="30"><rect x="0" y="0" width="30" height="30" fill="#000"/><g transform="translate(1.5,1.5) scale(0.964)"><rect width="28" height="28" fill="#2e2e2e"/><circle cx="14" cy="14" r="7.8" fill="#5e6488"/><path d="M14 14 L21.76 14.78 A7.8 7.8 0 0 1 20.87 17.69 Z" fill="#8a9ab2"/><path d="M14 14 L18.94 20.04 A7.8 7.8 0 0 1 16.25 21.47 Z" fill="#8a9ab2"/><path d="M14 14 L13.22 21.76 A7.8 7.8 0 0 1 10.31 20.87 Z" fill="#8a9ab2"/><path d="M14 14 L7.96 18.94 A7.8 7.8 0 0 1 6.53 16.25 Z" fill="#8a9ab2"/><path d="M14 14 L6.24 13.22 A7.8 7.8 0 0 1 7.13 10.31 Z" fill="#8a9ab2"/><path d="M14 14 L9.06 7.96 A7.8 7.8 0 0 1 11.75 6.53 Z" fill="#8a9ab2"/><path d="M14 14 L14.78 6.24 A7.8 7.8 0 0 1 17.69 7.13 Z" fill="#8a9ab2"/><path d="M14 14 L20.04 9.06 A7.8 7.8 0 0 1 21.47 11.75 Z" fill="#8a9ab2"/><circle cx="14" cy="14" r="7.8" fill="none" stroke="#5a5088" stroke-width="0.6"/></g></svg>
<div class="txt" style="left:1288px;top:550px;color:#f2f2f2;font-size:10.5px"><b>OutsideCircle</b> <span style="color:#a8a8a8">(Group)</span></div>
<div class="a" style="left:1450px;top:549px;width:13px;height:13px;border-radius:3px;background:linear-gradient(#3e3e3e,#333);border:1px solid #2a2a2a"></div>
<div class="a" style="left:1232px;top:574px;width:249px;height:33px;background:#393939;border-bottom:1px solid #2a2a2a"></div>
<svg class="a" style="left:1236px;top:583px" width="15" height="15"><circle cx="7.3" cy="7.4" r="6.8" fill="#2b2b2b"/><path d="M4.2 3.6 L11.3 7.4 L4.2 11.2 Z" fill="#c8c8c8"/></svg>
<svg class="a" style="left:1253px;top:575px" width="30" height="30"><rect x="0" y="0" width="30" height="30" fill="#000"/><g transform="translate(1.5,1.5) scale(0.964)"><rect width="28" height="28" fill="#2e2e2e"/><circle cx="14" cy="14" r="7.2" fill="none" stroke="#7080a0" stroke-width="2" stroke-dasharray="3 1.5"/></g></svg>
<div class="txt" style="left:1288px;top:583px;color:#f2f2f2;font-size:10.5px"><b>Petals</b> <span style="color:#a8a8a8">(Group)</span></div>
<div class="a" style="left:1450px;top:582px;width:13px;height:13px;border-radius:3px;background:linear-gradient(#3e3e3e,#333);border:1px solid #2a2a2a"></div>
<div class="a" style="left:1232px;top:607px;width:249px;height:33px;background:#393939;border-bottom:1px solid #2a2a2a"></div>
<svg class="a" style="left:1253px;top:608px" width="30" height="30"><rect x="0" y="0" width="30" height="30" fill="#000"/><g transform="translate(1.5,1.5) scale(0.964)"><rect width="28" height="28" fill="#3b3050"/></g></svg>
<div class="txt" style="left:1288px;top:616px;color:#f2f2f2;font-size:10.5px"><b>Background</b> <span style="color:#a8a8a8">(Rectangle)</span></div>
<div class="a" style="left:1450px;top:615px;width:13px;height:13px;border-radius:3px;background:linear-gradient(#3e3e3e,#333);border:1px solid #2a2a2a"></div>
<svg class="a" style="left:1451px;top:615px" width="12" height="12"><path d="M2.8 6.3 L5 9.3 L9.5 1.8" stroke="#f0f0f0" stroke-width="1.5" fill="none"/></svg>

<!-- layers bottom bar -->
<div class="a" style="left:1236px;top:670px;width:22px;height:20px;background:#3a3a3a"></div>
<svg class="a" style="left:1238px;top:672px" width="18" height="16"><path d="M1 2 H16 V4 L8.5 7.5 L1 4 Z" fill="#c8c8c8"/><path d="M1 7 L8.5 10.5 L16 7 M1 11 L8.5 14.5 L16 11" stroke="#c8c8c8" stroke-width="1.6" fill="none"/></svg>
<svg class="a" style="left:1314px;top:673px" width="16" height="14"><rect x="1" y="1.5" width="14" height="11" fill="#c0c0c0"/><circle cx="8" cy="7" r="3.7" fill="#333"/></svg>
<svg class="a" style="left:1337px;top:672px" width="16" height="16"><circle cx="8" cy="8" r="6" fill="none" stroke="#c0c0c0" stroke-width="1.4"/><path d="M8 2 A6 6 0 0 0 8 14 Z" fill="#c0c0c0"/><path d="M10 2.5 L6 13.5" stroke="#c0c0c0" stroke-width="1"/></svg>
<div class="a" style="left:1358px;top:670px;font-family:'Liberation Serif',serif;font-style:italic;font-size:14px;line-height:18px;color:#c0c0c0;white-space:nowrap;will-change:transform">ƒx</div>
<svg class="a" style="left:1429px;top:672px" width="14" height="16"><path d="M2.5 1.5 H8.5 L11.5 4.5 V14.5 H2.5 Z" fill="none" stroke="#c8c8c8" stroke-width="1.2"/><path d="M8.5 1.5 V4.5 H11.5" fill="none" stroke="#c8c8c8" stroke-width="1"/></svg>
<svg class="a" style="left:1452px;top:672px" width="16" height="16"><rect x="2" y="2" width="12" height="12" fill="#222"/><g fill="#c8c8c8"><rect x="2" y="2" width="2" height="2"/><rect x="6" y="2" width="2" height="2"/><rect x="10" y="2" width="2" height="2"/><rect x="4" y="4" width="2" height="2"/><rect x="8" y="4" width="2" height="2"/><rect x="12" y="4" width="2" height="2"/><rect x="2" y="6" width="2" height="2"/><rect x="6" y="6" width="2" height="2"/><rect x="10" y="6" width="2" height="2"/><rect x="4" y="8" width="2" height="2"/><rect x="8" y="8" width="2" height="2"/><rect x="12" y="8" width="2" height="2"/><rect x="2" y="10" width="2" height="2"/><rect x="6" y="10" width="2" height="2"/><rect x="10" y="10" width="2" height="2"/><rect x="4" y="12" width="2" height="2"/><rect x="8" y="12" width="2" height="2"/><rect x="12" y="12" width="2" height="2"/></g></svg>
<svg class="a" style="left:1475px;top:671px" width="14" height="17"><path d="M1 3.5 H13 M5 3.5 V1.5 H9 V3.5" stroke="#c8c8c8" stroke-width="1.2" fill="none"/><path d="M2.5 5 H11.5 L11 16 H3 Z" fill="none" stroke="#c8c8c8" stroke-width="1.2"/><path d="M5.5 6.5 V14.5 M8.5 6.5 V14.5" stroke="#c8c8c8" stroke-width="1"/></svg>

<!-- transform tab bar -->
<div class="a" style="left:1239px;top:700px;width:1px;height:9px;background:#555"></div>
<div class="a" style="left:1242px;top:700px;width:1px;height:9px;background:#555"></div>
<div class="a" style="left:1251px;top:694px;width:55px;height:20px;background:#424242"></div>
<div class="txt" style="left:1254px;top:698px;color:#f0f0f0">Transform</div>
<div class="txt" style="left:1311px;top:698px;color:#8c8c8c">History</div>
<div class="a" style="left:1350px;top:699px;width:1px;height:11px;background:#4a4a4a"></div>
<div class="txt" style="left:1354px;top:698px;color:#8c8c8c">Navigator</div>

<!-- transform body -->
<svg class="a" style="left:1248px;top:735px" width="40" height="40">
<rect x="4" y="3" width="33" height="32" fill="#5e5e5e"/>
<g fill="#555"><rect x="1.5" y="1" width="4" height="4"/><rect x="18" y="1" width="4" height="4"/><rect x="34.5" y="1" width="4" height="4"/><rect x="1.5" y="17" width="4" height="4"/><rect x="18" y="17" width="4" height="4"/><rect x="34.5" y="17" width="4" height="4"/><rect x="1.5" y="33.5" width="4" height="4"/><rect x="18" y="33.5" width="4" height="4"/><rect x="34.5" y="33.5" width="4" height="4"/></g>
</svg>
<div class="txt" style="left:1299px;top:730px;width:17px;text-align:right;color:#e0e0e0;font-size:10.5px">X:</div>
<div class="a" style="left:1319px;top:725px;width:60px;height:19px;border-radius:3px;background:#343434;border:1px solid #2a2a2a"></div>
<div class="txt" style="left:1323px;top:730px;color:#6e6e6e;font-size:10.5px">0 in</div>
<div class="txt" style="left:1299px;top:752px;width:17px;text-align:right;color:#e0e0e0;font-size:10.5px">Y:</div>
<div class="a" style="left:1319px;top:747px;width:60px;height:19px;border-radius:3px;background:#343434;border:1px solid #2a2a2a"></div>
<div class="txt" style="left:1323px;top:752px;color:#6e6e6e;font-size:10.5px">0 in</div>
<div class="txt" style="left:1299px;top:784px;width:17px;text-align:right;color:#e0e0e0;font-size:10.5px">R:</div>
<div class="a" style="left:1319px;top:779px;width:60px;height:19px;border-radius:3px;background:#343434;border:1px solid #2a2a2a"></div>
<div class="txt" style="left:1323px;top:784px;color:#6e6e6e;font-size:10.5px">0 °</div>
<svg class="a" style="left:1369px;top:786px" width="7" height="6"><path d="M0 0.5 H6 L3 5 Z" fill="#999"/></svg>
<div class="txt" style="left:1383px;top:730px;width:17px;text-align:right;color:#e0e0e0;font-size:10.5px">W:</div>
<div class="a" style="left:1403px;top:725px;width:60px;height:19px;border-radius:3px;background:#343434;border:1px solid #2a2a2a"></div>
<div class="txt" style="left:1407px;top:730px;color:#6e6e6e;font-size:10.5px">0 in</div>
<div class="txt" style="left:1383px;top:752px;width:17px;text-align:right;color:#e0e0e0;font-size:10.5px">H:</div>
<div class="a" style="left:1403px;top:747px;width:60px;height:19px;border-radius:3px;background:#343434;border:1px solid #2a2a2a"></div>
<div class="txt" style="left:1407px;top:752px;color:#6e6e6e;font-size:10.5px">0 in</div>
<div class="txt" style="left:1383px;top:784px;width:17px;text-align:right;color:#e0e0e0;font-size:10.5px">S:</div>
<div class="a" style="left:1403px;top:779px;width:60px;height:19px;border-radius:3px;background:#343434;border:1px solid #2a2a2a"></div>
<div class="txt" style="left:1407px;top:784px;color:#6e6e6e;font-size:10.5px">0 °</div>
<svg class="a" style="left:1453px;top:786px" width="7" height="6"><path d="M0 0.5 H6 L3 5 Z" fill="#999"/></svg>
<svg class="a" style="left:1472px;top:738px" width="8" height="16"><rect x="1.5" y="1.5" width="4.5" height="6" rx="2.2" fill="none" stroke="#c0c0c0" stroke-width="1.2"/><rect x="1.5" y="8.5" width="4.5" height="6" rx="2.2" fill="none" stroke="#c0c0c0" stroke-width="1.2"/></svg>
</body></html>
